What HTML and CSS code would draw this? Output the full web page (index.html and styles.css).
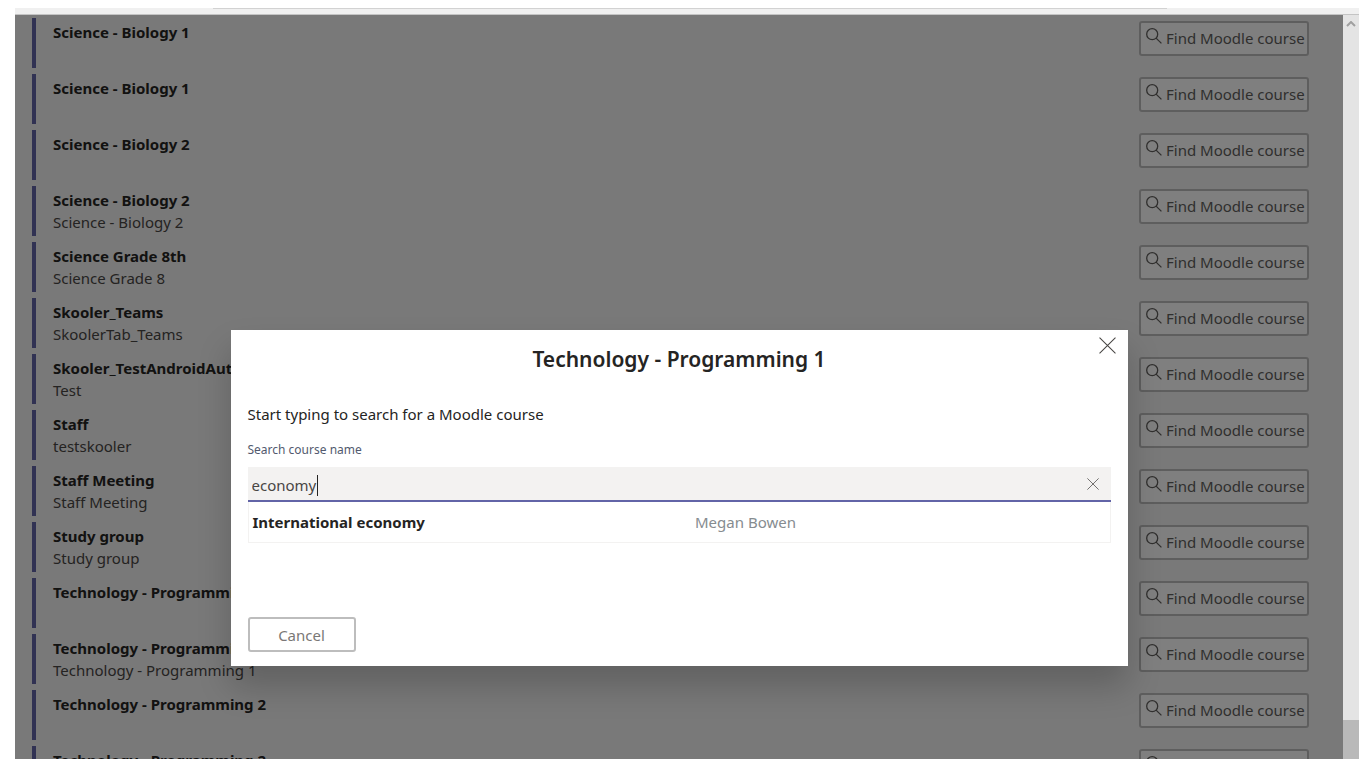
FILE: index.html
```html
<!DOCTYPE html>
<html lang="en">
<head>
    <meta charset="UTF-8">
    <meta name="viewport" content="width=device-width, initial-scale=1.0">
    <title>Moodle courses</title>
    <link rel="stylesheet" href="styles.css">
</head>
<body>
    <!-- Shared icons -->
    <svg class="sprite" aria-hidden="true">
        <symbol id="search" viewBox="0 0 16 16">
            <circle cx="6.2" cy="6.2" r="5.5"></circle>
            <path d="M10.1 10.1 L15.4 15.4"></path>
        </symbol>
        <symbol id="close" viewBox="0 0 16 16">
            <path d="M0.5 0.5 L15.5 15.5 M15.5 0.5 L0.5 15.5"></path>
        </symbol>
    </svg>

    <div class="topbar"><div class="topbar-line"></div></div>

    <div class="window">
        <main class="teams">
            <ul class="team-list" id="teamList"></ul>
        </main>

        <div class="scrollbar">
            <svg class="scroll-arrow" viewBox="0 0 10 6"><path d="M1 5 L5 1 L9 5"></path></svg>
            <div class="scroll-thumb"></div>
        </div>

        <div class="overlay">
            <div class="dialog" role="dialog" aria-labelledby="dialogTitle">
                <button class="dialog-close" aria-label="Close"><svg><use href="#close"></use></svg></button>
                <h2 id="dialogTitle">Technology - Programming 1</h2>
                <p>Start typing to search for a Moodle course</p>
                <label for="courseName">Search course name</label>
                <div class="search-box">
                    <input type="text" id="courseName" value="economy">
                    <span class="caret"></span>
                    <button class="clear" aria-label="Clear"><svg><use href="#close"></use></svg></button>
                </div>
                <div class="result">
                    <span class="result-name">International economy</span>
                    <span class="result-teacher">Megan Bowen</span>
                </div>
                <button class="cancel">Cancel</button>
            </div>
        </div>
    </div>

    <script src="script.js"></script>
</body>
</html>
```
FILE: styles.css
```css
* {
    box-sizing: border-box;
}

body {
    display: flex;
    flex-direction: column;
    height: 100vh;
    margin: 0;
    padding: 8px 7px 9px 15px;
    background-color: #fff;
    color: #252423;
    font-family: 'Noto Sans', 'Open Sans', sans-serif;
    font-size: 15px;
    line-height: 22px;
    overflow: hidden;
}

button,
input {
    font: inherit;
    margin: 0;
}

svg {
    display: block;
    fill: none;
    stroke: currentColor;
}

.sprite {
    display: none;
}

.topbar {
    flex: none;
    height: 7px;
    background-color: #f0f0f0;
    border-bottom: 1px solid #c4c4c4;
}

.topbar-line {
    width: 71%;
    height: 1px;
    margin-left: 198px;
    background-color: #d2d2d2;
}

.window {
    position: relative;
    display: flex;
    flex: 1;
    min-height: 0;
}

.teams {
    flex: 1;
    padding: 3px 34px 0 17px;
    background-color: #f3f2f2;
    overflow: hidden;
}

.team-list {
    display: flex;
    flex-direction: column;
    gap: 6px;
    margin: 0;
    padding: 0;
    list-style: none;
}

.team {
    display: flex;
    flex: none;
    justify-content: space-between;
    align-items: flex-start;
    height: 50px;
    padding: 3px 0 0 17px;
    border-left: 4px solid #6264a7;
}

.team-title {
    font-weight: 700;
}

.team-text {
    color: #484644;
}

.find {
    display: flex;
    gap: 4px;
    width: 170px;
    height: 35px;
    padding: 4px 0 0 5px;
    background-color: #fff;
    border: 2px solid #bdbdbd;
    border-radius: 3px;
    color: #605e5c;
    white-space: nowrap;
}

.find svg {
    flex: none;
    width: 16px;
    height: 16px;
    margin-top: 1px;
    stroke-width: 1.3;
}

/* Scrollbar of the page */
.scrollbar {
    display: flex;
    flex-direction: column;
    justify-content: space-between;
    align-items: center;
    width: 16px;
    background-color: #e4e4e4;
}

.scroll-arrow {
    width: 10px;
    height: 6px;
    margin-top: 6px;
    stroke: #a0a0a0;
    stroke-width: 2;
}

.scroll-thumb {
    width: 100%;
    height: 39px;
    background-color: #b9b9b9;
}

/* Dialog */
.overlay {
    position: absolute;
    inset: 0 16px 0 0;
    display: flex;
    justify-content: center;
    align-items: flex-start;
    padding-top: 315px;
    background-color: rgba(0, 0, 0, 0.5);
    overflow: hidden;
}

.dialog {
    position: relative;
    width: 90%;
    max-width: 897px;
    padding: 15px 17px 14px;
    background-color: #fff;
    box-shadow: 0 20px 32px rgba(0, 0, 0, 0.2);
}

.dialog h2 {
    margin: 0 0 30px;
    font-size: 21px;
    font-weight: 600;
    line-height: 28px;
    text-align: center;
}

.dialog p {
    margin: 0 0 14px;
}

.dialog label {
    display: block;
    margin-bottom: 6px;
    color: #525a6e;
    font-size: 12px;
}

.dialog-close,
.clear {
    position: absolute;
    padding: 0;
    border: none;
    background: none;
    color: #484644;
}

.dialog-close {
    top: 7px;
    right: 12px;
}

.dialog-close svg {
    width: 17px;
    height: 17px;
}

.search-box {
    position: relative;
}

.search-box input {
    display: block;
    width: 100%;
    height: 35px;
    padding: 2px 40px 0 4px;
    border: none;
    border-bottom: 2px solid #6264a7;
    background-color: #f3f2f1;
    color: #484644;
    outline: none;
}

.caret {
    position: absolute;
    top: 8px;
    left: 69px;
    width: 1px;
    height: 21px;
    background-color: #252423;
}

.clear {
    top: 11px;
    right: 12px;
}

.clear svg {
    width: 12px;
    height: 12px;
}

.result {
    display: grid;
    grid-template-columns: 1fr 1fr;
    margin-bottom: 74px;
    padding: 9px 0 9px 4px;
    border: 1px solid #f3f2f1;
    border-top: none;
}

.result-name {
    font-weight: 700;
}

.result-teacher {
    padding-left: 14px;
    color: #868c90;
}

.cancel {
    display: block;
    width: 108px;
    height: 35px;
    background-color: #fff;
    border: 2px solid #bdbdbd;
    border-radius: 3px;
    color: #7a7876;
}
```
FILE: script.js
```javascript
const teams = [
    ["Science - Biology 1", ""],
    ["Science - Biology 1", ""],
    ["Science - Biology 2", ""],
    ["Science - Biology 2", "Science - Biology 2"],
    ["Science Grade 8th", "Science Grade 8"],
    ["Skooler_Teams", "SkoolerTab_Teams"],
    ["Skooler_TestAndroidAut", "Test"],
    ["Staff", "testskooler"],
    ["Staff Meeting", "Staff Meeting"],
    ["Study group", "Study group"],
    ["Technology - Programming 1", ""],
    ["Technology - Programming 1", "Technology - Programming 1"],
    ["Technology - Programming 2", ""],
    ["Technology - Programming 2", ""]
];

// Fill the list of teams
document.getElementById("teamList").innerHTML = teams.map(([title, text]) => `
    <li class="team">
        <div>
            <div class="team-title">${title}</div>
            <div class="team-text">${text}</div>
        </div>
        <button class="find"><svg><use href="#search"></use></svg>Find Moodle course</button>
    </li>`).join("");
```
